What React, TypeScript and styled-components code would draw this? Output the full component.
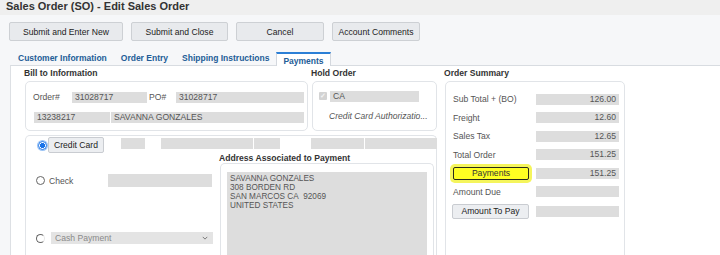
import styled, { createGlobalStyle } from 'styled-components'
import { FC, ReactNode } from 'react'

const GlobalStyle = createGlobalStyle`
  html, body {
    margin: 0;
    padding: 0;
    background: #f6f7f9;
  }
  body {
    font-family: "Liberation Sans", Arial, sans-serif;
    font-size: 8.6px;
    color: #444;
  }
`

const summaryRows = [
  { label: 'Sub Total + (BO)', value: '126.00' },
  { label: 'Freight', value: '12.60' },
  { label: 'Sales Tax', value: '12.65' },
  { label: 'Total Order', value: '151.25' },
]

type TSectionProps = {
  title: string
  width: number
  children: ReactNode
  grow?: boolean
}

const Section: FC<TSectionProps> = (props: TSectionProps) => (
  <SectionWrap $width={props.width} $grow={props.grow}>
    <SectionTitle>{props.title}</SectionTitle>
    <SectionBox $grow={props.grow}>{props.children}</SectionBox>
  </SectionWrap>
)

export default function App() {
  return (
    <Page>
      <GlobalStyle />
      <TitleBar>Sales Order (SO) - Edit Sales Order</TitleBar>
      <Toolbar>
        <ToolButton $width={114}>Submit and Enter New</ToolButton>
        <ToolButton $width={97}>Submit and Close</ToolButton>
        <ToolButton $width={88}>Cancel</ToolButton>
        <ToolButton $width={88}>Account Comments</ToolButton>
      </Toolbar>
      <Tabs>
        <Tab>Customer Information</Tab>
        <Tab>Order Entry</Tab>
        <Tab>Shipping Instructions</Tab>
        <Tab $active>Payments</Tab>
      </Tabs>
      <Panel>
        <LeftColumn>
          <TopRow>
            <Section title="Bill to Information" width={284}>
              <BillBody>
                <FieldRow>
                  <Label $width={39}>Order#</Label>
                  <Input $width={75}>31028717</Input>
                  <Label $width={27} $offset={2}>PO#</Label>
                  <Input $width={128}>31028717</Input>
                </FieldRow>
                <FieldRow $indent={1}>
                  <Input $width={76}>13238217</Input>
                  <Input $width={193} $offset={1}>SAVANNA GONZALES</Input>
                </FieldRow>
              </BillBody>
            </Section>
            <Section title="Hold Order" width={126}>
              <HoldBody>
                <FieldRow>
                  <Checkbox>✓</Checkbox>
                  <Input $width={89} $offset={3}>CA</Input>
                </FieldRow>
                <AuthNote>Credit Card Authorizatio...</AuthNote>
              </HoldBody>
            </Section>
          </TopRow>
          <PaymentBox>
            <PaymentTop>
              <Radio $checked $offset={12} />
              <SmallButton $width={56} $height={16} $offset={1}>
                Credit Card
              </SmallButton>
              <Input $width={24} $offset={17} />
              <Input $width={92} $offset={16} />
              <Input $width={26} $offset={1} />
              <Input $width={53} $offset={31} />
              <Input $width={72} $offset={1} />
            </PaymentTop>
            <PaymentBody>
              <MethodColumn>
                <MethodRow $top={21}>
                  <Radio $offset={10} />
                  <MethodLabel>Check</MethodLabel>
                  <Input $width={104} $height={13} $offset={35} />
                </MethodRow>
                <MethodRow $top={45}>
                  <Radio $offset={10} $faded />
                  <Select>
                    <span>Cash Payment</span>
                    <Chevron viewBox="0 0 8 5">
                      <path d="M1 1 L4 4 L7 1" />
                    </Chevron>
                  </Select>
                </MethodRow>
              </MethodColumn>
              <AddressSection>
                <SectionTitle $height={10}>Address Associated to Payment</SectionTitle>
                <AddressBox>
                  <AddressText>
                    SAVANNA GONZALES
                    <br />
                    308 BORDEN RD
                    <br />
                    SAN MARCOS CA&nbsp; 92069
                    <br />
                    UNITED STATES
                  </AddressText>
                </AddressBox>
              </AddressSection>
            </PaymentBody>
          </PaymentBox>
        </LeftColumn>
        <Section title="Order Summary" width={181} grow>
          <SummaryBody>
            {summaryRows.map((r) => (
              <SummaryRow key={r.label}>
                <SummaryLabel>{r.label}</SummaryLabel>
                <Input $width={83} $align="right">
                  {r.value}
                </Input>
              </SummaryRow>
            ))}
            <SummaryRow>
              <HighlightButton>Payments</HighlightButton>
              <Input $width={83} $align="right">
                151.25
              </Input>
            </SummaryRow>
            <SummaryRow>
              <SummaryLabel>Amount Due</SummaryLabel>
              <Input $width={83} />
            </SummaryRow>
            <SummaryRow $pad={1}>
              <SmallButton $width={77} $height={15} $offset={-1}>
                Amount To Pay
              </SmallButton>
              <Input $width={83} />
            </SummaryRow>
          </SummaryBody>
        </Section>
      </Panel>
    </Page>
  )
}

const Page = styled.div`
  width: 720px;
  height: 255px;
  overflow: hidden;
  display: flex;
  flex-direction: column;
  background: #f6f7f9;
`
const TitleBar = styled.div`
  flex-shrink: 0;
  height: 15px;
  line-height: 12px;
  padding-left: 6px;
  background: #efefef;
  font-size: 11px;
  font-weight: bold;
  color: #333;
`
const Toolbar = styled.div`
  flex-shrink: 0;
  display: flex;
  gap: 8px;
  padding: 7px 0 0 9px;
  height: 19px;
`
const ToolButton = styled.div<{ $width: number }>`
  width: ${(p) => p.$width}px;
  height: 19px;
  box-sizing: border-box;
  display: flex;
  align-items: center;
  justify-content: center;
  background: #e8eaed;
  border: 1px solid #cdd0d4;
  border-radius: 2px;
  color: #222;
`
const Tabs = styled.div`
  flex-shrink: 0;
  display: flex;
  align-items: flex-end;
  margin: 10px 0 0 11px;
  height: 14px;
`
const Tab = styled.div<{ $active?: boolean }>`
  padding: ${(p) => (p.$active ? '1px 6px 0' : '0 6px 1px')};
  height: 14px;
  line-height: 13px;
  box-sizing: border-box;
  font-weight: bold;
  font-size: 8.5px;
  color: #235d97;
  background: ${(p) => (p.$active ? '#fff' : 'transparent')};
  border: ${(p) => (p.$active ? '1px solid #d4d8de' : '1px solid transparent')};
  border-top: ${(p) => (p.$active ? '2px solid #2b7fd6' : '1px solid transparent')};
  border-bottom: none;
  margin-bottom: ${(p) => (p.$active ? '-1px' : '0')};
  position: relative;
`
const Panel = styled.div`
  flex: 1;
  min-height: 0;
  overflow: hidden;
  display: flex;
  align-items: flex-start;
  gap: 7px;
  margin-left: 10px;
  padding: 0 0 0 13px;
  background: #fff;
  border-top: 1px solid #d8dce1;
  border-left: 1px solid #dde0e4;
`
const LeftColumn = styled.div`
  width: 413px;
  height: 220px;
  flex-shrink: 0;
  display: flex;
  flex-direction: column;
  gap: 4px;
`
const TopRow = styled.div`
  display: flex;
  gap: 3px;
`
const SectionWrap = styled.div<{ $width: number; $grow?: boolean }>`
  width: ${(p) => p.$width}px;
  flex-shrink: 0;
  display: flex;
  flex-direction: column;
  ${(p) => (p.$grow ? 'height: 220px;' : '')}
`
const SectionTitle = styled.div<{ $height?: number }>`
  height: ${(p) => p.$height ?? 14}px;
  line-height: ${(p) => p.$height ?? 14}px;
  flex-shrink: 0;
  font-weight: bold;
  color: #333;
  white-space: nowrap;
`
const SectionBox = styled.div<{ $grow?: boolean }>`
  margin: 1px 0 0 1px;
  border: 1px solid #e1e4e8;
  border-radius: 5px;
  background: #fff;
  ${(p) => (p.$grow ? 'flex: 1;' : '')}
`
const BillBody = styled.div`
  height: 48px;
  box-sizing: border-box;
  padding: 9px 0 0 7px;
  display: flex;
  flex-direction: column;
  gap: 8px;
`
const HoldBody = styled.div`
  height: 48px;
  box-sizing: border-box;
  padding: 8px 0 0 6px;
`
const FieldRow = styled.div<{ $indent?: number }>`
  display: flex;
  align-items: center;
  height: 12px;
  padding-left: ${(p) => p.$indent ?? 0}px;
`
const Label = styled.span<{ $width: number; $offset?: number }>`
  width: ${(p) => p.$width}px;
  margin-left: ${(p) => p.$offset ?? 0}px;
  color: #555;
  white-space: nowrap;
`
const Input = styled.div<{
  $width: number
  $height?: number
  $offset?: number
  $align?: 'left' | 'right'
}>`
  width: ${(p) => p.$width}px;
  height: ${(p) => p.$height ?? 11}px;
  margin-left: ${(p) => p.$offset ?? 0}px;
  box-sizing: border-box;
  flex-shrink: 0;
  background: #dddddd;
  color: #555;
  padding: 0 3px;
  display: flex;
  align-items: center;
  justify-content: ${(p) => (p.$align === 'right' ? 'flex-end' : 'flex-start')};
  line-height: 1;
  white-space: nowrap;
  overflow: hidden;
`
const Checkbox = styled.span`
  width: 8px;
  height: 8px;
  background: #d3d3d3;
  border-radius: 1px;
  color: #f4f4f4;
  font-size: 7px;
  line-height: 8px;
  text-align: center;
  font-weight: bold;
`
const AuthNote = styled.div`
  margin: 9px 0 0 10px;
  font-style: italic;
  color: #555;
  white-space: nowrap;
`
const PaymentBox = styled.div`
  flex: 1;
  margin-left: 1px;
  border: 1px solid #e1e4e8;
  border-bottom: none;
  border-radius: 5px 5px 0 0;
  display: flex;
  flex-direction: column;
`
const PaymentTop = styled.div`
  display: flex;
  align-items: center;
  height: 16px;
  padding-top: 1px;
  & > div:nth-child(n + 3) {
    align-self: flex-start;
    margin-top: 1px;
  }
`
const Radio = styled.span<{ $checked?: boolean; $offset?: number; $faded?: boolean }>`
  width: 9px;
  height: 9px;
  box-sizing: border-box;
  flex-shrink: 0;
  margin-left: ${(p) => p.$offset ?? 0}px;
  border-radius: 50%;
  border: 1px solid ${(p) => (p.$checked ? '#1a73e8' : '#666')};
  border-right-color: ${(p) => (p.$checked ? '#1a73e8' : p.$faded ? '#e6e6e6' : '#666')};
  background: ${(p) => (p.$checked ? 'radial-gradient(circle, #1a73e8 0 2.3px, #fff 2.5px)' : '#fff')};
  box-shadow: ${(p) => (p.$checked ? '0 0 0 1px #9cc4f5' : 'none')};
`
const SmallButton = styled.div<{ $width: number; $height: number; $offset?: number }>`
  width: ${(p) => p.$width}px;
  height: ${(p) => p.$height}px;
  margin-left: ${(p) => p.$offset ?? 0}px;
  box-sizing: border-box;
  flex-shrink: 0;
  display: flex;
  align-items: center;
  justify-content: center;
  background: #eceef1;
  border: 1px solid #c9ccd1;
  border-radius: 2px;
  color: #222;
  white-space: nowrap;
`
const PaymentBody = styled.div`
  flex: 1;
  display: flex;
`
const MethodColumn = styled.div`
  width: 193px;
  display: flex;
  flex-direction: column;
`
const MethodRow = styled.div<{ $top: number }>`
  display: flex;
  align-items: center;
  margin-top: ${(p) => p.$top}px;
`
const MethodLabel = styled.span`
  margin-left: 4px;
  color: #555;
`
const Select = styled.div`
  width: 162px;
  height: 12px;
  margin-left: 6px;
  box-sizing: border-box;
  padding: 0 5px 0 4px;
  display: flex;
  align-items: center;
  justify-content: space-between;
  background: #e4e4e4;
  color: #8a8a8a;
`
const Chevron = styled.svg`
  width: 6px;
  height: 4px;
  fill: none;
  stroke: #777;
  stroke-width: 1.3;
`
const AddressSection = styled.div`
  flex: 1;
  display: flex;
  flex-direction: column;
  padding-right: 2px;
`
const AddressBox = styled.div`
  flex: 1;
  margin-left: 1px;
  border: 1px solid #e1e4e8;
  border-bottom: none;
  border-radius: 5px 5px 0 0;
  padding: 8px 6px 0 6px;
  display: flex;
`
const AddressText = styled.div`
  flex: 1;
  background: #dddddd;
  padding: 2px 3px;
  font-size: 8.2px;
  line-height: 9px;
  color: #555;
`
const SummaryBody = styled.div`
  padding: 8px 5px 0 7px;
`
const SummaryRow = styled.div<{ $pad?: number }>`
  height: 18.5px;
  padding-top: ${(p) => p.$pad ?? 0}px;
  display: flex;
  align-items: center;
  justify-content: space-between;
`
const SummaryLabel = styled.span`
  color: #555;
  white-space: nowrap;
`
const HighlightButton = styled.div`
  width: 76px;
  height: 13px;
  box-sizing: border-box;
  display: flex;
  align-items: center;
  justify-content: center;
  background: #ffff22;
  border: 1.5px solid #2a2a1a;
  border-radius: 2px;
  color: #333;
  box-shadow: 0 0 0 3px #f5f55c;
`
